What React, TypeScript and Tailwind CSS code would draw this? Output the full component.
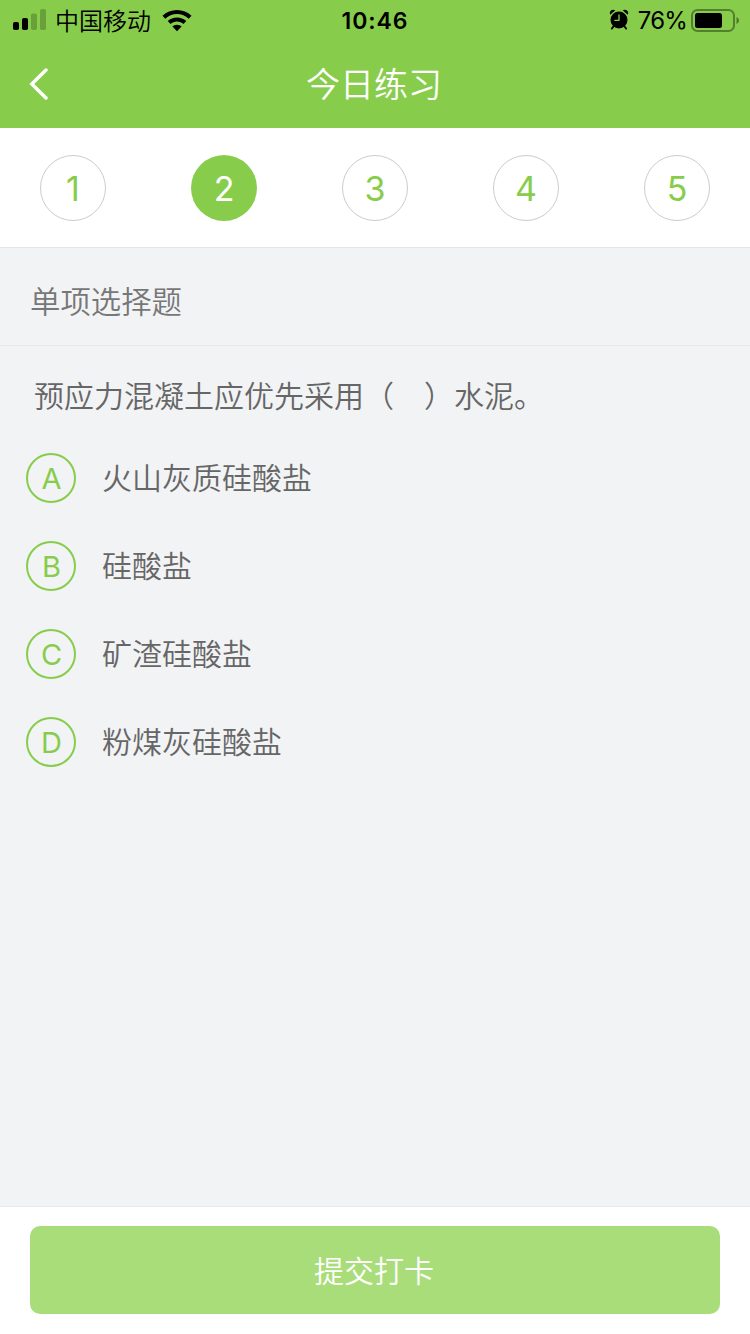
import { useState } from "react";
import clsx from "clsx";

const questions = [1, 2, 3, 4, 5];

const options = [
  { id: "A", text: "火山灰质硅酸盐" },
  { id: "B", text: "硅酸盐" },
  { id: "C", text: "矿渣硅酸盐" },
  { id: "D", text: "粉煤灰硅酸盐" },
];

function SignalIcon() {
  return (
    <svg width="34" height="22" viewBox="0 0 34 22">
      <rect x="0" y="13" width="6" height="8" rx="1.8" />
      <rect x="9" y="9" width="6" height="12" rx="1.8" />
      <rect x="18" y="4.5" width="6" height="16.5" rx="1.8" fillOpacity="0.22" />
      <rect x="27" y="0" width="6" height="21" rx="1.8" fillOpacity="0.22" />
    </svg>
  );
}

function WifiIcon() {
  return (
    <svg width="30" height="22" viewBox="0 0 30 22">
      <path d="M15 0C9.400 0 4.300 2.200 0.500 5.700L3.300 8.700C6.400 5.800 10.500 4.100 15 4.100S23.600 5.800 26.700 8.700L29.500 5.700C25.700 2.200 20.600 0 15 0Z" />
      <path d="M15 7.500C11.400 7.500 8.200 8.800 5.700 11.100L8.500 14C10.200 12.400 12.500 11.500 15 11.500S19.800 12.400 21.500 14L24.300 11.100C21.800 8.800 18.600 7.500 15 7.500Z" />
      <path d="M15 14.800C13.200 14.800 11.600 15.500 10.400 16.500L15 21.300L19.600 16.500C18.400 15.500 16.800 14.800 15 14.800Z" />
    </svg>
  );
}

function AlarmIcon() {
  return (
    <svg width="20" height="22" viewBox="0 0 20 22">
      <path d="M1.300 5.800C-0.400 3 2.600 -0.600 6.300 1.300Z" />
      <path d="M18.700 5.800C20.400 3 17.400 -0.600 13.700 1.300Z" />
      <path d="M4.800 17L2.800 19.600M15.200 17L17.200 19.600" stroke="black" strokeWidth="1.800" strokeLinecap="round" />
      <circle cx="10" cy="11" r="8.500" />
      <path d="M10 6V11.300H5.800" fill="none" stroke="#87cd4b" strokeWidth="1.300" strokeLinecap="round" strokeLinejoin="round" />
    </svg>
  );
}

function BatteryIcon() {
  return (
    <svg width="49" height="24" viewBox="0 0 49 24">
      <rect x="1" y="1" width="42" height="21" rx="5.500" fill="none" stroke="black" strokeOpacity="0.38" strokeWidth="2" />
      <rect x="4" y="4" width="27" height="15" rx="2.500" />
      <path d="M45.500 8C47.200 8.800 48 10 48 11.500S47.200 14.200 45.500 15Z" fillOpacity="0.42" />
    </svg>
  );
}

function StatusBar() {
  return (
    <div className="grid h-10 grid-cols-3 items-center pl-[13px] pr-[10px] text-black">
      <div className="flex h-10 items-center">
        <span className="pb-0.5">
          <SignalIcon />
        </span>
        <span className="ml-2 pt-[3px] text-[24px] font-[350] leading-10">中国移动</span>
        <span className="ml-[11px]">
          <WifiIcon />
        </span>
      </div>
      <div className="pr-[3px] pt-px text-center text-[23px] font-semibold leading-10 tracking-[0.9px]">10:46</div>
      <div className="flex h-10 items-center justify-end">
        <span className="pb-0.5">
          <AlarmIcon />
        </span>
        <span className="ml-[9px] mr-[4px] pt-px text-[24px] leading-10 tracking-[-0.8px]">76%</span>
        <BatteryIcon />
      </div>
    </div>
  );
}

export default function App() {
  const [current, setCurrent] = useState(2);

  return (
    <div className="flex h-[1334px] w-[750px] flex-col overflow-hidden bg-[#f2f3f5] font-['Inter','Noto_Sans_CJK_SC',sans-serif]">
      <header className="h-32 shrink-0 bg-[#87cd4b]">
        <StatusBar />
        <div className="grid h-[88px] grid-cols-[100px_1fr_100px] items-center">
          <button className="pl-[29px]">
            <svg width="20" height="32" viewBox="0 0 20 32" fill="none" stroke="white" strokeWidth="3.4">
              <path d="M17 2L2.800 16L17 30" strokeLinecap="round" />
            </svg>
          </button>
          <h1 className="pr-0.5 pt-px text-center text-[34px] font-[350] leading-[87px] text-white">今日练习</h1>
        </div>
      </header>

      <nav className="flex h-[120px] shrink-0 items-center justify-between border-b border-[#e3e4e5] bg-white px-10">
        {questions.map((n) => (
          <button
            key={n}
            onClick={() => setCurrent(n)}
            className={clsx(
              "flex size-[66px] items-center justify-center rounded-full pt-0.5 text-[34px]",
              n === current ? "bg-[#87cd4b] text-white" : "border border-[#cccccc] text-[#87cd4b]"
            )}
          >
            {n}
          </button>
        ))}
      </nav>

      <div className="h-[98px] shrink-0 border-b border-[#e7e8ea] pl-[30px] pt-[11px] text-[30.4px] font-[350] leading-[87px] text-[#777777]">
        单项选择题
      </div>

      <main className="flex-1 pl-[26px] pt-[26px] font-[350] text-[#666666]">
        <p className="pl-2 text-[30px] leading-[48px]">预应力混凝土应优先采用（　）水泥。</p>
        <ul className="mt-[33px] flex flex-col gap-[38px]">
          {options.map((option) => (
            <li key={option.id} className="flex h-[50px] items-center">
              <span className="flex size-[50px] items-center justify-center rounded-full border-2 border-[#87cd4b] pl-px pt-0.5 text-[29px] font-normal text-[#87cd4b]">
                {option.id}
              </span>
              <span className="ml-[26px] text-[30px] leading-[50px]">{option.text}</span>
            </li>
          ))}
        </ul>
      </main>

      <footer className="h-32 shrink-0 border-t border-[#e7e8ea] bg-white px-[30px] pt-[19px]">
        <button className="h-[88px] w-full rounded-[10px] bg-[#a9dd7a] pr-0.5 pt-0.5 text-[30px] font-[350] text-white">
          提交打卡
        </button>
      </footer>
    </div>
  );
}
